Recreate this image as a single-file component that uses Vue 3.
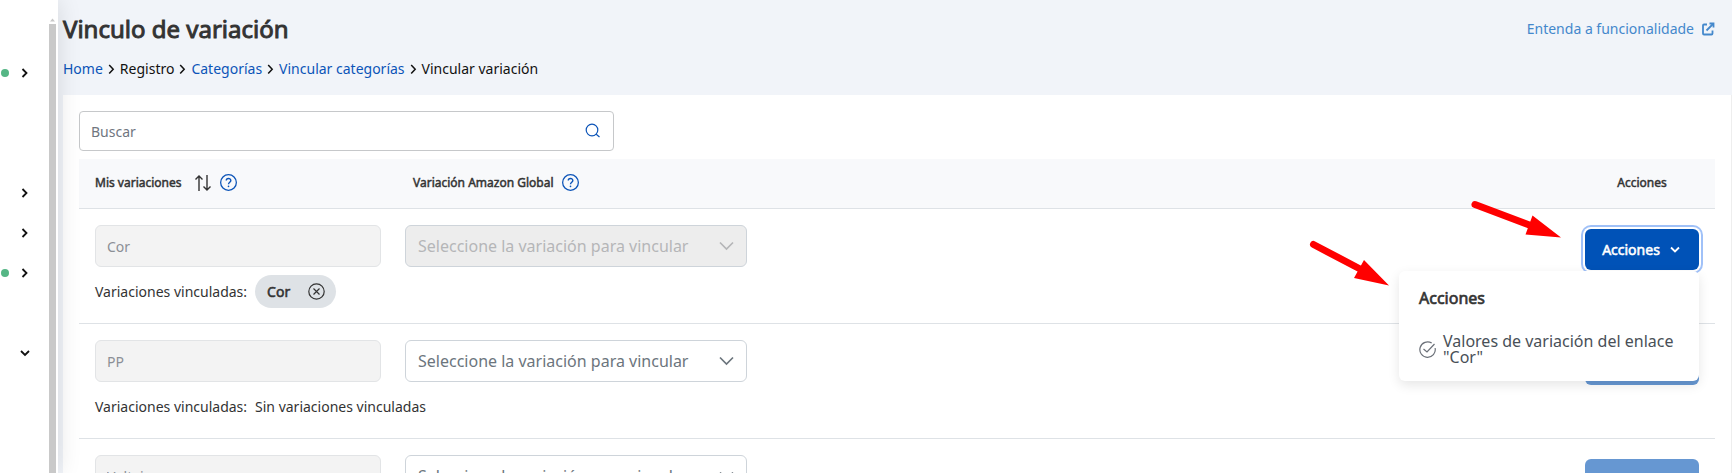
<script setup>
import { ref } from 'vue'

const search = ref('')
const menuItems = [
  { icon: 'right', dot: true },
  {},
  {},
  { icon: 'right' },
  { icon: 'right' },
  { icon: 'right', dot: true },
  {},
  { icon: 'down' },
]
const crumbs = [
  { label: 'Home', link: true },
  { label: 'Registro' },
  { label: 'Categorías', link: true },
  { label: 'Vincular categorías', link: true },
  { label: 'Vincular variación' },
]
const rows = [
  { name: 'Cor', linked: 'Cor', open: true },
  { name: 'PP' },
  { name: 'Voltaje' },
]
</script>

<template>
  <div class="app">
    <nav class="sidebar" aria-label="Menú">
      <div class="items">
        <div v-for="(m, i) in menuItems" :key="i" class="item">
          <span v-if="m.dot" class="dot"></span>
          <button v-if="m.icon" type="button" class="toggle" aria-label="Expandir">
            <svg width="10" height="10" viewBox="0 0 10 10">
              <path :d="m.icon === 'right' ? 'M2.5 1 L6.5 5 L2.5 9' : 'M1 3 L5 7 L9 3'" fill="none" stroke="#111" stroke-width="1.8" />
            </svg>
          </button>
        </div>
      </div>
      <div class="scrollbar">
        <svg width="7" height="4" viewBox="0 0 7 4"><path d="M1 3.5 L3.5 0.5 L6 3.5Z" fill="#c9c9c9" /></svg>
        <div class="thumb"></div>
      </div>
    </nav>

    <main class="main">
      <header class="head">
        <div class="head-top">
          <h1>Vinculo de variación</h1>
          <a href="#" class="help">
            Entenda a funcionalidade
            <svg width="14" height="14" viewBox="0 0 14 14" fill="none" stroke="currentColor" stroke-width="1.8">
              <path d="M6 2.5H3Q2 2.5 2 3.5V11.5Q2 12.5 3 12.5H10.5Q11.5 12.5 11.5 11.5V8.5" />
              <path d="M5.5 8.5 L12 2" />
              <path d="M8.500 1.500H12.500V5.500" />
            </svg>
          </a>
        </div>
        <nav class="crumbs" aria-label="Ruta">
          <template v-for="(c, i) in crumbs" :key="c.label">
            <svg v-if="i" width="7" height="12" viewBox="0 0 7 12"><path d="M1.2 2 L5.2 6.3 L1.2 10.6" fill="none" stroke="#111" stroke-width="1.5" /></svg>
            <a v-if="c.link" href="#">{{ c.label }}</a>
            <span v-else>{{ c.label }}</span>
          </template>
        </nav>
      </header>

      <section class="panel">
        <div class="search">
          <input v-model="search" type="text" placeholder="Buscar" aria-label="Buscar" />
          <button type="button" aria-label="Buscar">
            <svg width="16" height="16" viewBox="0 0 16 16" fill="none" stroke="#0c54b8" stroke-width="1.2">
              <circle cx="7" cy="7" r="5.8" /><path d="M11.2 11.2 L14.500 14" />
            </svg>
          </button>
        </div>

        <table>
          <colgroup><col class="c1" /><col /><col class="c3" /></colgroup>
          <thead>
            <tr>
              <th scope="col">
                <div class="th">
                  <span>Mis variaciones</span>
                  <svg class="sort" width="18" height="18" viewBox="0 0 18 18" fill="none" stroke="#333" stroke-width="1.4">
                    <path d="M5 17V2 M1.5 5.5 L5 2 L8.5 5.5" />
                    <path d="M13 1V16 M9.5 12.5 L13 16 L16.5 12.5" />
                  </svg>
                  <svg width="17" height="17" viewBox="0 0 16 16" fill="none" stroke="#0c54b8">
                    <circle cx="8" cy="8" r="7.4" stroke-width="1.2" />
                    <path d="M5.9 6.2C5.9 3.6 10.2 3.6 10.2 6.1C10.2 7.7 8 7.8 8 9.6" stroke-width="1.3" />
                    <circle cx="8" cy="11.6" r=".8" fill="#0c54b8" stroke="none" />
                  </svg>
                </div>
              </th>
              <th scope="col" class="wide">
                <div class="th">
                  <span>Variación Amazon Global</span>
                  <svg width="17" height="17" viewBox="0 0 16 16" fill="none" stroke="#0c54b8">
                    <circle cx="8" cy="8" r="7.4" stroke-width="1.2" />
                    <path d="M5.9 6.2C5.9 3.6 10.2 3.6 10.2 6.1C10.2 7.7 8 7.8 8 9.6" stroke-width="1.3" />
                    <circle cx="8" cy="11.6" r=".8" fill="#0c54b8" stroke="none" />
                  </svg>
                </div>
              </th>
              <th scope="col" class="center">Acciones</th>
            </tr>
          </thead>
          <tbody>
            <tr v-for="r in rows" :key="r.name">
              <td>
                <input class="name" type="text" :value="r.name" disabled aria-label="Mi variación" />
                <div class="linked">
                  <span>Variaciones vinculadas:</span>
                  <span v-if="r.linked" class="chip">
                    {{ r.linked }}
                    <button type="button" aria-label="Quitar">
                      <svg width="17" height="17" viewBox="0 0 17 17" fill="none" stroke="#333" stroke-width="1.2">
                        <circle cx="8.5" cy="8.5" r="7.7" /><path d="M5.5 5.5 L11.5 11.5 M11.5 5.5 L5.5 11.5" />
                      </svg>
                    </button>
                  </span>
                  <span v-else>Sin variaciones vinculadas</span>
                </div>
              </td>
              <td>
                <div class="select" :class="{ off: r.linked }">
                  <select :disabled="!!r.linked" aria-label="Variación Amazon Global">
                    <option>Seleccione la variación para vincular</option>
                  </select>
                  <svg width="16" height="10" viewBox="0 0 16 10"><path d="M1 1.5 L7.5 8 L14 1.5" fill="none" stroke="currentColor" stroke-width="1.7" /></svg>
                </div>
              </td>
              <td class="actions">
                <button type="button" class="btn" :class="{ focused: r.open, dim: !r.open }" :aria-expanded="!!r.open">
                  Acciones
                  <svg width="12" height="8" viewBox="0 0 12 8"><path d="M1 1.5 L5 5.5 L9 1.5" fill="none" stroke="#fff" stroke-width="1.8" /></svg>
                </button>
                <div v-if="r.open" class="menu">
                  <h2>Acciones</h2>
                  <a href="#">
                    <svg width="17" height="17" viewBox="0 0 17 17" fill="none" stroke="#6b7078" stroke-width="1.2">
                      <path d="M12.7 2.1A7.7 7.7 0 1 0 16.1 7" />
                      <path d="M4.5 8 L8 11 L15.5 3" />
                    </svg>
                    <span>Valores de variación del enlace "Cor"</span>
                  </a>
                </div>
              </td>
            </tr>
          </tbody>
        </table>
      </section>
    </main>

    <svg class="arrows" width="260" height="100" viewBox="1305 195 260 100" aria-hidden="true">
      <g stroke="#f00" stroke-width="7" stroke-linecap="round">
        <path d="M1475 204.5 L1532 226" /><path d="M1313.5 244.5 L1362 270" />
      </g>
      <path d="M1561 237.5 L1532.5 215.5 L1525.5 234.5Z M1389 285.5 L1364 260 L1354 278Z" fill="#f00" />
    </svg>
  </div>
</template>

<style>
body { margin: 0; background: #fff; }
</style>

<style scoped>
* { box-sizing: border-box; }
.app {
  position: relative;
  display: flex;
  height: 100vh;
  overflow: hidden;
  font: 14px/20px "Noto Sans", sans-serif;
  color: #333;
}
button, input, select { font: inherit; color: inherit; }
svg { flex: none; }
a { color: #0c54b8; text-decoration: none; }
h1, h2, th, .chip, .btn { font-weight: 400; -webkit-text-stroke: 0.04em currentColor; }

.sidebar {
  z-index: 2;
  display: flex;
  flex: none;
  width: 58px;
  background: #fff;
  box-shadow: 0 0 24px rgba(0, 0, 0, .12);
}
.items { flex: 1; padding-top: 53px; }
.item {
  display: flex;
  align-items: center;
  justify-content: flex-end;
  height: 40px;
  padding: 0 19px 0 1px;
}
.dot { width: 8px; height: 8px; margin-right: auto; border-radius: 50%; background: #55b685; }
.toggle { display: flex; padding: 0; border: 0; background: none; }
.scrollbar { display: flex; flex-direction: column; gap: 2px; width: 9px; padding-top: 18px; }
.scrollbar svg { display: block; }
.thumb { flex: 1; width: 7px; background: #c9c9c9; }

.main { flex: 1; min-width: 0; padding: 0 0 0 5px; background: #f1f4f9; }
.head { height: 95px; padding: 12px 17px 0 0; }
.head-top { display: flex; justify-content: space-between; align-items: center; }
h1 { margin: 0; font-size: 24px; line-height: 34px; }
.help { display: flex; align-items: center; gap: 7px; color: #4488cc; }
.crumbs { display: flex; align-items: center; gap: 5px; margin-top: 13px; color: #111; }

.panel { height: 100%; padding: 16px 16px 0; border-right: 1px solid #eee; background: #fff; }
.search { display: flex; width: 535px; height: 40px; border: 1px solid #c6c8ca; border-radius: 4px; }
.search input { flex: 1; padding: 2px 11px 0; border: 0; outline: 0; background: none; }
.search input::placeholder { color: #707680; opacity: 1; }
.search button { display: flex; align-items: center; padding: 0 12px; border: 0; background: none; }

table { width: 100%; margin-top: 8px; border-collapse: separate; border-spacing: 0; table-layout: fixed; }
.c1 { width: 310px; }
.c3 { width: 146px; }
th {
  height: 50px;
  padding: 0 16px 2px;
  border-bottom: 1px solid #dee2e6;
  background: #f8f9fb;
  font-size: 12px;
  text-align: left;
}
th.wide { padding-left: 24px; }
.th { display: flex; align-items: center; gap: 8px; }
.sort { margin-left: 4px; }
th.center { text-align: center; }
td { position: relative; height: 115px; padding: 16px 16px 15px; border-bottom: 1px solid #dee2e6; vertical-align: top; }
td:first-child { padding-right: 8px; }
.name {
  display: block;
  width: 286px;
  height: 42px;
  padding: 0 11px;
  border: 1px solid #e2e4e6;
  border-radius: 6px;
  background: #f3f3f3;
  color: #8b8f96;
}
.linked { display: flex; align-items: center; gap: 8px; height: 33px; margin-top: 8px; white-space: nowrap; }
.chip {
  display: flex;
  align-items: center;
  gap: 18px;
  height: 33px;
  padding: 0 11px 0 12px;
  border-radius: 17px;
  background: #dee2e6;
}
.chip button { display: flex; padding: 0; border: 0; background: none; }
.select { display: grid; align-items: center; width: 342px; height: 42px; color: #6c757d; }
.select select {
  grid-area: 1 / 1;
  width: 100%;
  height: 42px;
  padding: 0 12px;
  border: 1px solid #ced4da;
  border-radius: 6px;
  appearance: none;
  background: #fff;
  color: inherit;
  font-size: 16px;
  opacity: 1;
}
.select svg { grid-area: 1 / 1; justify-self: end; margin-right: 12px; pointer-events: none; }
.select.off { color: #b5b6b8; }
.select.off select { background: #ededed; }
td.actions { padding-top: 20px; }
.btn {
  display: flex;
  align-items: center;
  justify-content: center;
  gap: 10px;
  width: 100%;
  height: 41px;
  padding: 0;
  border: 0;
  border-radius: 6px;
  background: #0052b7;
  color: #fff;
}
.btn.focused { box-shadow: 0 0 0 2px #fff, 0 0 0 4px #a0c1f8; }
.btn.dim { background: #6697d2; }
.menu {
  position: absolute;
  z-index: 3;
  top: 62px;
  right: 16px;
  width: 300px;
  padding: 15px 20px 16px;
  border-radius: 6px;
  background: #fff;
  box-shadow: 0 4px 12px rgba(0, 0, 0, .1);
}
h2 { margin: 0; font-size: 16px; line-height: 24px; }
.menu a { display: flex; align-items: center; gap: 7px; margin-top: 23px; color: #495057; font-size: 16px; line-height: 16px; }
.arrows { position: absolute; top: 195px; right: 167px; z-index: 4; pointer-events: none; }
</style>
